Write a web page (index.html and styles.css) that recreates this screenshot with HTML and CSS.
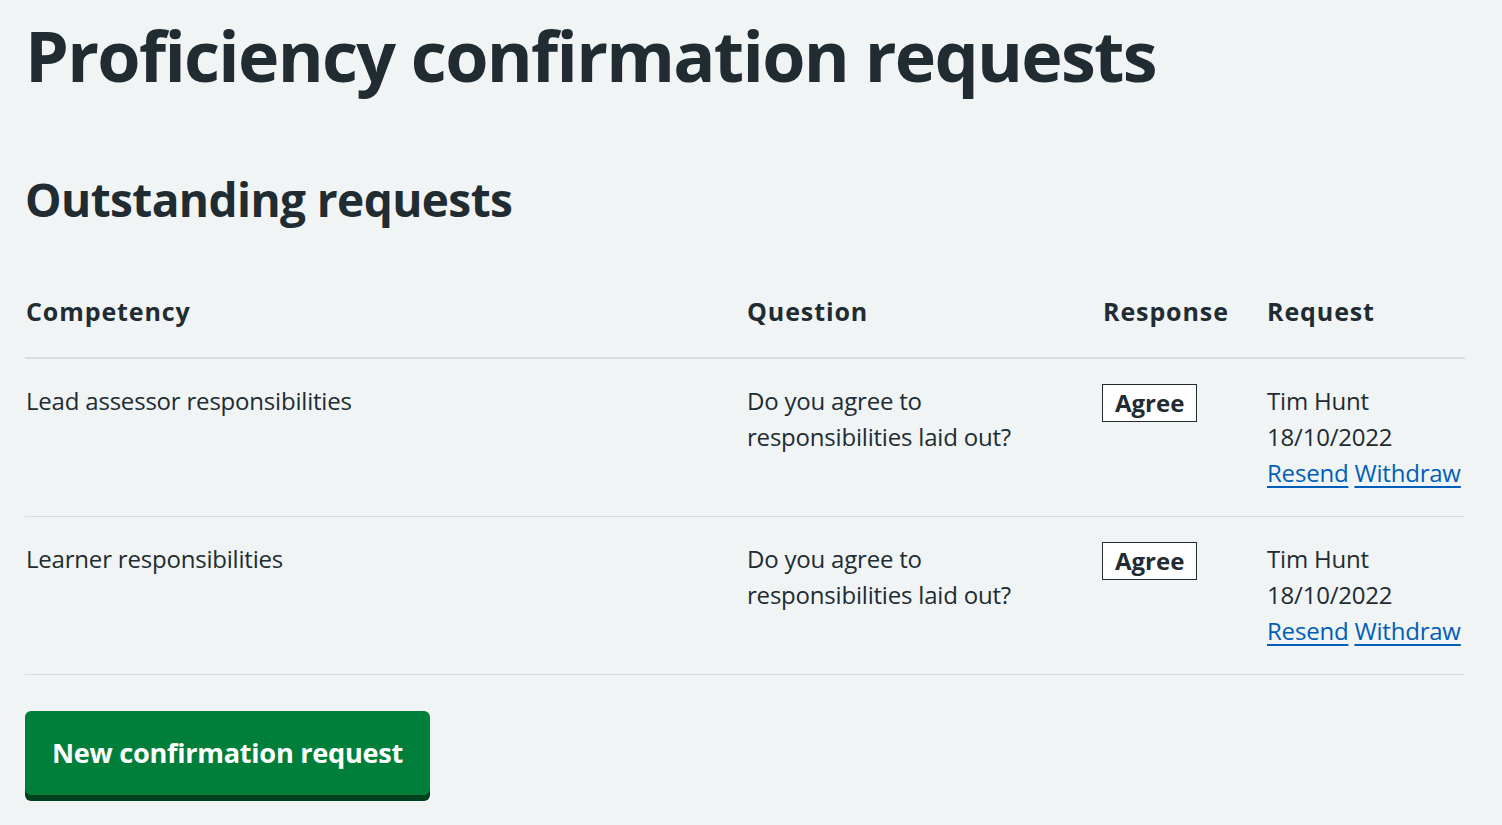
FILE: index.html
```html
<!DOCTYPE html>
<html lang="en">
<head>
<meta charset="utf-8">
<title>Proficiency confirmation requests</title>
<link rel="stylesheet" href="styles.css">
</head>
<body>
<main class="page">
  <h1 class="title">Proficiency confirmation requests</h1>
  <h2 class="subtitle">Outstanding requests</h2>
  <table class="requests">
    <colgroup>
      <col class="col-competency">
      <col class="col-question">
      <col class="col-response">
      <col class="col-request">
    </colgroup>
    <thead>
      <tr>
        <th>Competency</th>
        <th>Question</th>
        <th>Response</th>
        <th>Request</th>
      </tr>
    </thead>
    <tbody>
      <tr>
        <td>Lead assessor responsibilities</td>
        <td>Do you agree to responsibilities laid out?</td>
        <td><span class="tag">Agree</span></td>
        <td>Tim Hunt<br>18/10/2022<br><a href="#">Resend</a> <a href="#">Withdraw</a></td>
      </tr>
      <tr>
        <td>Learner responsibilities</td>
        <td>Do you agree to responsibilities laid out?</td>
        <td><span class="tag">Agree</span></td>
        <td>Tim Hunt<br>18/10/2022<br><a href="#">Resend</a> <a href="#">Withdraw</a></td>
      </tr>
    </tbody>
  </table>
  <div class="actions">
    <button class="button" type="button">New confirmation request</button>
  </div>
</main>
</body>
</html>
```
FILE: styles.css
```css
html, body {
  margin: 0;
  padding: 0;
  background: #f0f4f5;
}
body {
  font-family: "Open Sans", "Noto Sans", sans-serif;
  color: #212b32;
}
.page {
  padding: 13px 37px 24px 25px;
  width: 1440px;
}
.title {
  font-size: 70px;
  line-height: 84px;
  font-weight: 700;
  letter-spacing: -1.7px;
  margin: 0 0 74px;
}
.subtitle {
  font-size: 46px;
  line-height: 56px;
  font-weight: 700;
  letter-spacing: -0.6px;
  margin: 0 0 66px;
}
.requests {
  width: 1440px;
  border-collapse: collapse;
  table-layout: fixed;
  font-size: 24px;
  line-height: 36px;
  letter-spacing: -0.2px;
}
.col-competency { width: 721px; }
.col-question { width: 356px; }
.col-response { width: 164px; }
.col-request { width: 199px; }
.requests th {
  text-align: left;
  font-weight: 700;
  font-size: 25px;
  letter-spacing: 0.9px;
  padding: 0 24px 28px 1px;
  border-bottom: 2px solid #d8dde0;
  vertical-align: top;
}
.requests td {
  padding: 24px 24px 25px 1px;
  border-bottom: 1px solid #d8dde0;
  vertical-align: top;
}
.requests th:last-child,
.requests td:last-child {
  padding-right: 0;
}
.requests td:nth-child(3) {
  padding-left: 0;
}
.tag {
  display: inline-block;
  background: #ffffff;
  border: 1px solid #212b32;
  padding: 6px 12px;
  font-weight: 700;
  font-size: 24px;
  line-height: 24px;
  letter-spacing: 0;
  margin-top: 1px;
}
a {
  color: #005eb8;
  text-decoration: underline;
  text-decoration-thickness: 2px;
  text-underline-offset: 4px;
}
.actions {
  display: flex;
  padding-top: 36px;
  padding-bottom: 6px;
}
.button {
  font-family: inherit;
  font-size: 27.2px;
  line-height: 42px;
  font-weight: 700;
  letter-spacing: -0.3px;
  color: #ffffff;
  background: #007f3b;
  border: 3px solid #007f3b;
  border-radius: 6px;
  padding: 18px 24px;
  box-shadow: 0 6px 0 #00401e;
  cursor: pointer;
}
```
